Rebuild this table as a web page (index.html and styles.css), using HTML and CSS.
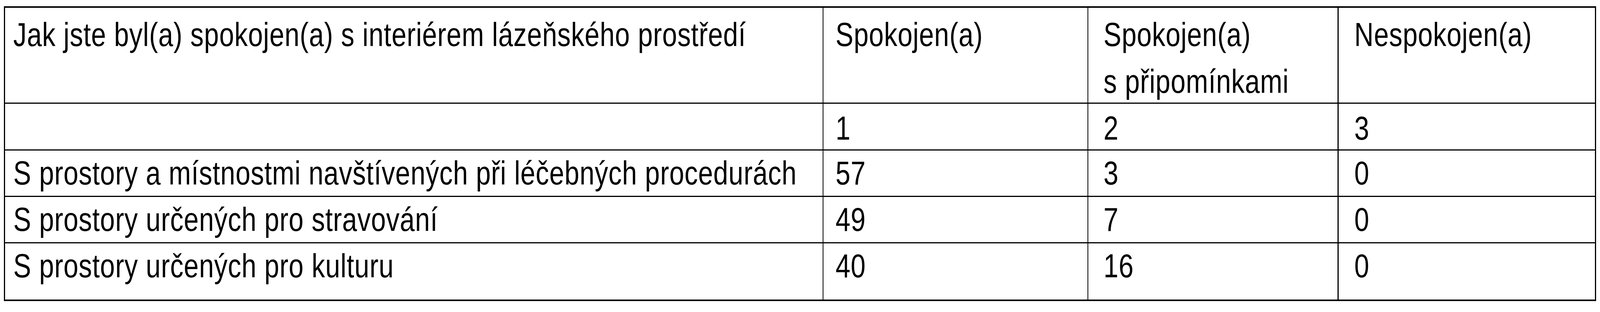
FILE: index.html
```html
<!DOCTYPE html>
<html lang="cs">
<head>
<meta charset="utf-8">
<title>Spokojenost s interiérem</title>
<link rel="stylesheet" href="styles.css">
</head>
<body>
<div class="survey" role="table">
  <div class="cell head c1"><span class="t">Jak jste byl(a) spokojen(a) s interiérem lázeňského prostředí</span></div>
  <div class="cell head c2"><span class="t">Spokojen(a)</span></div>
  <div class="cell head c3"><span class="t">Spokojen(a)<br>s připomínkami</span></div>
  <div class="cell head c4"><span class="t">Nespokojen(a)</span></div>

  <div class="cell codes c1"></div>
  <div class="cell codes c2"><span class="t">1</span></div>
  <div class="cell codes c3"><span class="t">2</span></div>
  <div class="cell codes c4"><span class="t">3</span></div>

  <div class="cell c1"><span class="t">S prostory a místnostmi navštívených při léčebných procedurách</span></div>
  <div class="cell c2"><span class="t">57</span></div>
  <div class="cell c3"><span class="t">3</span></div>
  <div class="cell c4"><span class="t">0</span></div>

  <div class="cell c1"><span class="t">S prostory určených pro stravování</span></div>
  <div class="cell c2"><span class="t">49</span></div>
  <div class="cell c3"><span class="t">7</span></div>
  <div class="cell c4"><span class="t">0</span></div>

  <div class="cell c1"><span class="t">S prostory určených pro kulturu</span></div>
  <div class="cell c2"><span class="t">40</span></div>
  <div class="cell c3"><span class="t">16</span></div>
  <div class="cell c4"><span class="t">0</span></div>
</div>
</body>
</html>
```

FILE: styles.css
```css
html, body {
  margin: 0;
  padding: 0;
  background: #ffffff;
  overflow-x: hidden;
}

body {
  font-family: "Liberation Sans", Arial, Helvetica, sans-serif;
  font-size: 85px;
  letter-spacing: 1px;
  color: #000000;
}

/* Horizontal measures are fractions of a 5095px wide canvas, so the table
   always spans the window the same way; vertical measures are fixed. */
.survey {
  display: grid;
  width: fit-content;
  margin: 16px 0 0 0.2355vw;
  grid-template-columns: 51.1089vw 16.4868vw 15.5839vw 16.0157vw;
  grid-template-rows: 243px 117px 116px 116px 144px;
  column-gap: 0.0589vw;
  row-gap: 3px;
  border-style: solid;
  border-color: #000000;
  border-width: 4px 0.0785vw;
  background: #000000;
}

.cell {
  background: #ffffff;
  line-height: 115px;
  white-space: nowrap;
  min-width: 0;
}

.t {
  display: inline-block;
  transform-origin: 0 0;
}

/* Text keeps the canvas proportions when the window is narrower than it. */
@media (max-width: 5094px) {
  .t {
    transform: scaleX(0.80392);
    transform: scaleX(calc(100vw / 5095px));
  }
}

.head {
  line-height: 120px;
  padding-top: 9px;
}

.codes {
  padding-top: 5px;
}

.c1 { padding-left: 0.5299vw; }
.c2 { padding-left: 0.7458vw; }
.c3 { padding-left: 0.9421vw; }
.c4 { padding-left: 0.9814vw; }
```
